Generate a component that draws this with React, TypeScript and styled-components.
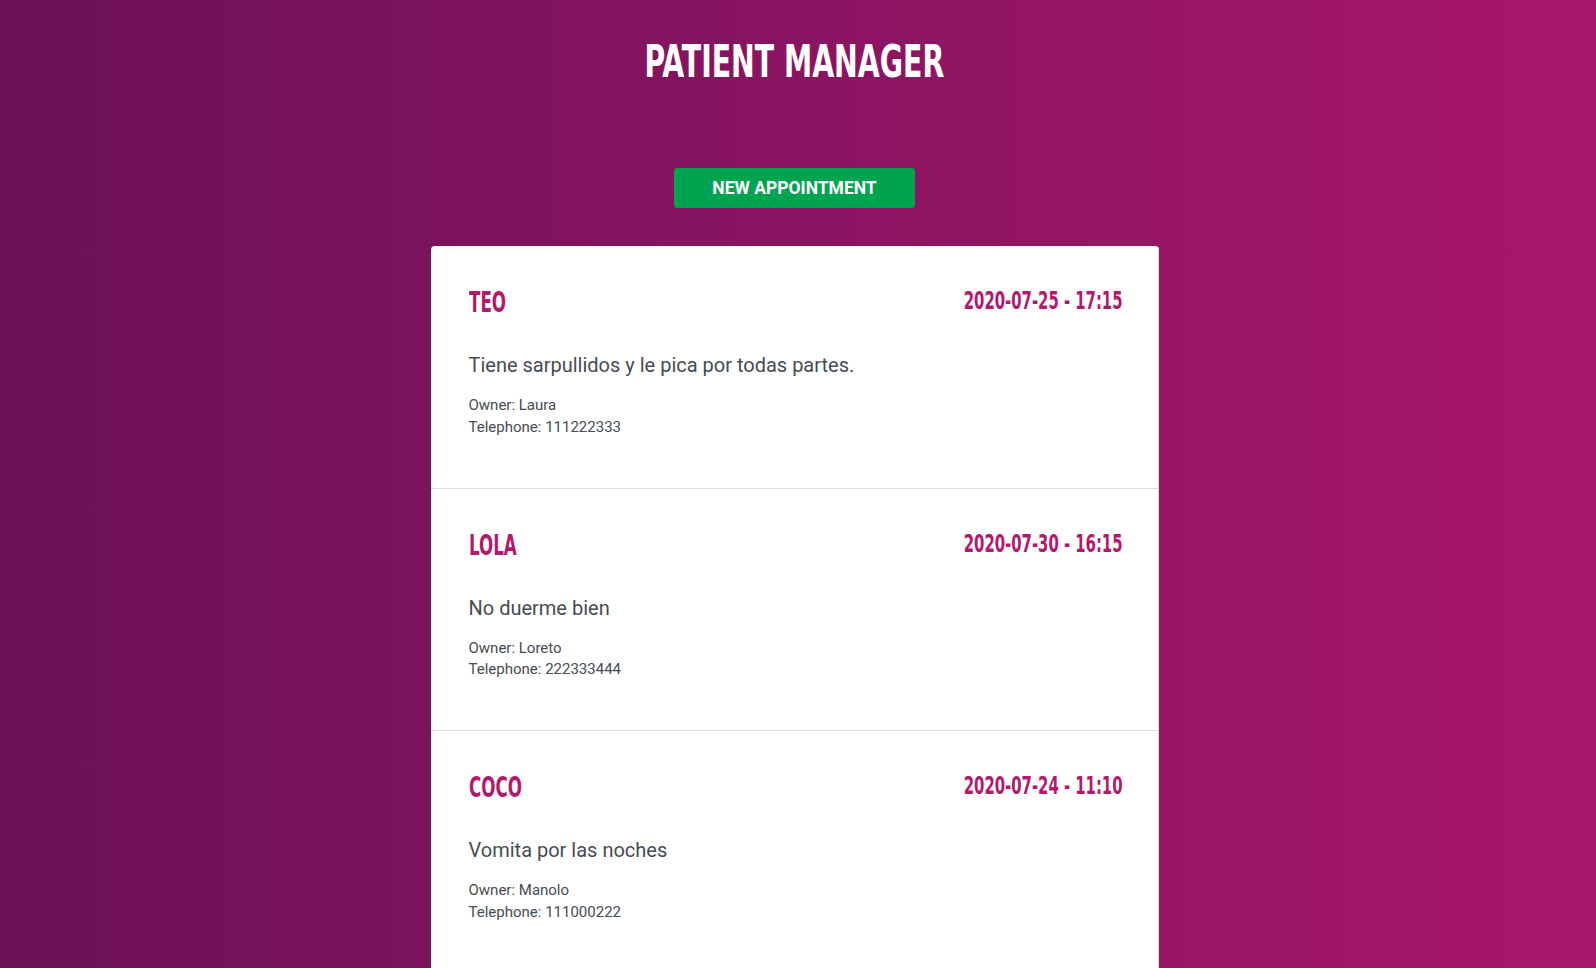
import React from 'react';
import styled, { createGlobalStyle } from 'styled-components';

const GlobalStyle = createGlobalStyle`
  * { box-sizing: border-box; }
  html, body { margin: 0; padding: 0; }
  body {
    font-family: Roboto, "Liberation Sans", sans-serif;
    background: linear-gradient(to right, #6b1159, #a9176a);
    min-height: 100vh;
  }
`;

const condensed = `"Liberation Sans Narrow", "DejaVu Sans Condensed", sans-serif`;

const Page = styled.div`
  display: flex;
  flex-direction: column;
  align-items: center;
  padding: 35px 7px 0 0;
`;

const Title = styled.h1`
  margin: 0;
  font-family: ${condensed};
  font-weight: 700;
  font-size: 44px;
  line-height: 54px;
  color: #fff;
  text-transform: uppercase;
`;

// the reference uses a tall display face, so squeeze the condensed one
const Squeeze = styled.span<{ $scale: number; $origin?: string }>`
  display: inline-block;
  transform: scaleX(${(p) => p.$scale});
  transform-origin: ${(p) => p.$origin || 'center'};
  white-space: nowrap;
`;

const NewButton = styled.button`
  margin-top: 79px;
  width: 241px;
  height: 40px;
  border: none;
  border-radius: 3px;
  background: #00a34f;
  color: #fff;
  font-family: Roboto, sans-serif;
  font-weight: 700;
  font-size: 17.5px;
  text-transform: uppercase;
  cursor: pointer;
`;

const List = styled.div`
  margin-top: 38px;
  width: 728px;
  background: #fff;
  border-radius: 4px 4px 0 0;
  overflow: hidden;
`;

const Item = styled.div`
  padding: 38px 35px 49px 38px;
  border-bottom: 1px solid #dcdcdc;
  border-right: 1px solid #dcdcdc;
`;

const ItemHead = styled.div`
  display: flex;
  justify-content: space-between;
  align-items: flex-start;
`;

const Name = styled.h3`
  margin: 0;
  font-family: ${condensed};
  font-weight: 700;
  font-size: 29px;
  line-height: 36px;
  color: #b3186c;
  text-transform: uppercase;
`;

const When = styled.span`
  font-family: ${condensed};
  font-weight: 700;
  font-size: 25px;
  line-height: 33px;
  color: #b3186c;
`;

const Description = styled.p`
  margin: 30px 0 15px;
  font-size: 20px;
  line-height: 30px;
  color: #454c53;
`;

const Detail = styled.p`
  margin: 0;
  font-size: 15px;
  line-height: 21.75px;
  color: #454c53;
`;

type Appointment = {
  pet: string;
  date: string;
  time: string;
  symptoms: string;
  owner: string;
  phone: string;
};

const appointments: Appointment[] = [
  { pet: 'Teo', date: '2020-07-25', time: '17:15', symptoms: 'Tiene sarpullidos y le pica por todas partes.', owner: 'Laura', phone: '111222333' },
  { pet: 'Lola', date: '2020-07-30', time: '16:15', symptoms: 'No duerme bien', owner: 'Loreto', phone: '222333444' },
  { pet: 'Coco', date: '2020-07-24', time: '11:10', symptoms: 'Vomita por las noches', owner: 'Manolo', phone: '111000222' },
];

const App: React.FC = () => {
  return (
    <>
      <GlobalStyle />
      <Page>
        <Title>
          <Squeeze $scale={0.716}>Patient Manager</Squeeze>
        </Title>
        <NewButton>New appointment</NewButton>
        <List>
          {appointments.map((a) => (
            <Item key={a.pet}>
              <ItemHead>
                <Name>
                  <Squeeze $scale={0.64} $origin="left">{a.pet}</Squeeze>
                </Name>
                <When>
                  <Squeeze $scale={0.66} $origin="right">
                    {a.date} - {a.time}
                  </Squeeze>
                </When>
              </ItemHead>
              <Description>{a.symptoms}</Description>
              <Detail>Owner: {a.owner}</Detail>
              <Detail>Telephone: {a.phone}</Detail>
            </Item>
          ))}
        </List>
      </Page>
    </>
  );
};

export default App;
